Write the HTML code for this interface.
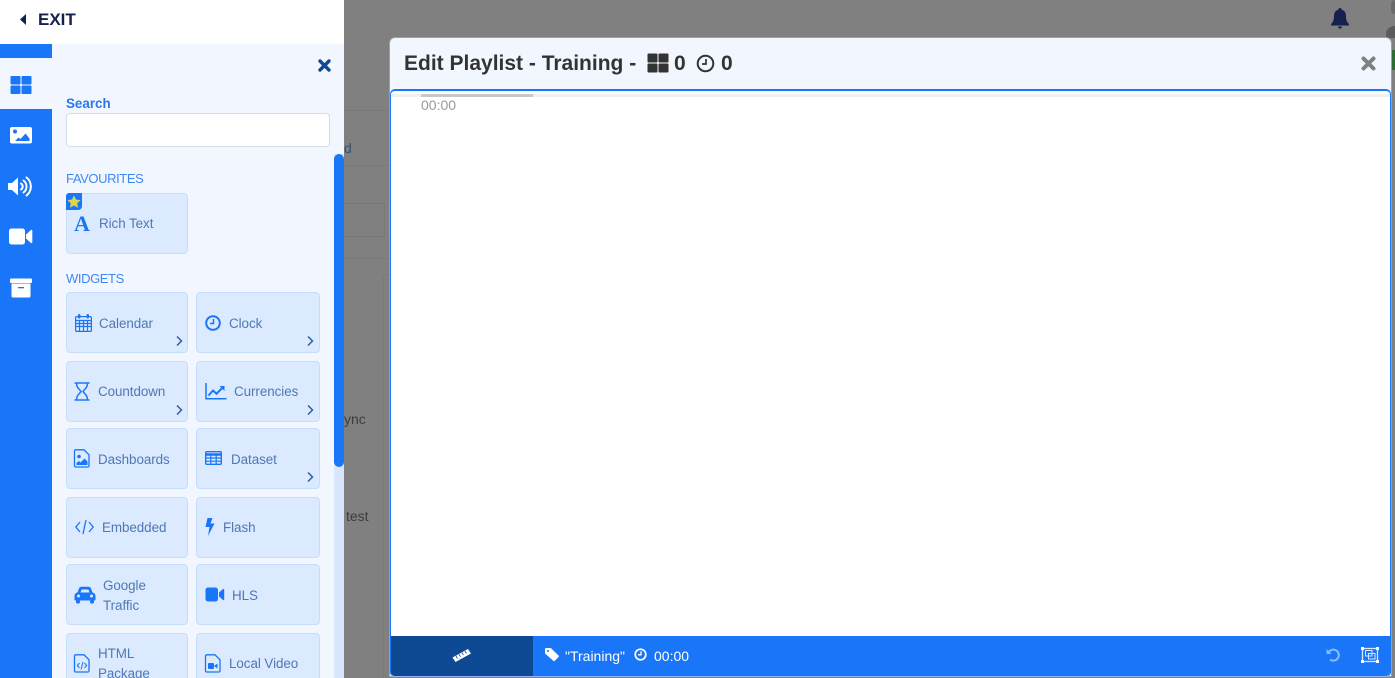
<!DOCTYPE html>
<html><head><meta charset="utf-8">
<style>
*{box-sizing:border-box}
html,body{margin:0;padding:0;width:1395px;height:678px;overflow:hidden;background:#808080;font-family:"Liberation Sans",sans-serif}
#w{position:relative;width:1395px;height:678px;overflow:hidden;background:#808080}
.a{position:absolute}
svg{position:absolute;display:block;overflow:visible}
.card{position:absolute;background:#dbeafe;border:1px solid #c6defb;border-radius:4px;width:122px;height:61px}
.card.r{width:124px}
.card .chev{right:3px}
.card.r .chev{right:4px}
.t{position:absolute;font-size:13.4px;line-height:20px;margin-top:1px;letter-spacing:-.05px;color:#4f78b4;white-space:nowrap}
.bg{position:absolute;color:#3d3d3d;font-size:14px}
.chev{position:absolute;bottom:5px;width:10px;height:12px}
</style></head>
<body><div id="w">
<!-- background -->
<div class="a" style="left:344px;top:110px;width:45px;height:1px;background:#797979"></div>
<div class="a" style="left:344px;top:165px;width:45px;height:1px;background:#797979"></div>
<div class="a" style="left:344px;top:203px;width:41px;height:34px;border:1px solid #797979;border-left:0"></div>
<div class="a" style="left:344px;top:258px;width:45px;height:1px;background:#797979"></div>
<div class="a" style="left:383px;top:274px;width:6px;height:404px;border-left:1px solid #797979;border-top:1px solid #797979;border-radius:4px 0 0 0"></div>
<div class="bg" style="left:344px;top:140px;color:#35506f">d</div>
<div class="bg" style="left:344px;top:411px">ync</div>
<div class="bg" style="left:346px;top:508px">test</div>
<svg style="left:1330px;top:8px" width="20" height="22" viewBox="0 0 20 22"><path d="M10 0c1 0 1.600.7 1.600 1.600C14.500 2.300 16 4.800 16 8c0 5 1.500 6.500 3 8v1.500H1V16c1.500-1.500 3-3 3-8 0-3.200 1.500-5.700 4.400-6.400C8.400.7 9 0 10 0zM8 18.500h4a2 2 0 0 1-4 0z" fill="#16204d"/></svg>
<div class="a" style="left:1386px;top:26px;width:12px;height:12px;background:#5c5c5c;border-radius:8px 0 0 0"></div>
<div class="a" style="left:1391px;top:0;width:6px;height:14px;background:#6a6a6a;border-radius:4px 0 0 4px"></div>
<div class="a" style="left:1391px;top:50px;width:4px;height:20px;background:#2d6a34"></div>

<!-- left panel -->
<div class="a" style="left:0;top:0;width:344px;height:44px;background:#fff"></div>
<svg style="left:20px;top:14px" width="6" height="11" viewBox="0 0 6 11"><path d="M6 0v11L0 5.500z" fill="#14204d"/></svg>
<div class="a" style="left:38px;top:9px;font-size:17px;line-height:22px;font-weight:bold;color:#14204d">EXIT</div>
<div class="a" style="left:52px;top:44px;width:292px;height:634px;background:#f2f7ff"></div>
<div class="a" style="left:0;top:44px;width:52px;height:634px;background:#1a76f8"></div>
<div class="a" style="left:0;top:58px;width:52px;height:51px;background:#f2f7ff"></div>
<div class="a" style="left:334px;top:154px;width:10px;height:524px;background:#d9e7fc"></div>
<div class="a" style="left:334px;top:154px;width:10px;height:313px;background:#1a76f8;border-radius:5px"></div>

<!-- tab icons -->
<svg style="left:10px;top:75px" width="22" height="20" viewBox="0 0 22 20"><g fill="#1a76f8"><rect x="0.500" y="1" width="10" height="8.500" rx="1"/><rect x="11.500" y="1" width="10" height="8.500" rx="1"/><rect x="0.500" y="10.500" width="10" height="8.500" rx="1"/><rect x="11.500" y="10.500" width="10" height="8.500" rx="1"/></g></svg>
<svg style="left:10px;top:127px" width="22" height="17" viewBox="0 0 22 17"><rect x="0" y="0" width="22" height="16.500" rx="2" fill="#fff"/><circle cx="5" cy="4.500" r="2" fill="#1a76f8"/><path d="M5 14l3.500-3.500 2 1.500 5-5.500 4 5V14z" fill="#1a76f8"/></svg>
<svg style="left:8px;top:176px" width="26" height="21" viewBox="0 0 26 21"><path d="M0 7h4l6-5.500v18L4 14H0z" fill="#fff"/><path d="M13 7.500a3.500 3.500 0 0 1 0 6M15.500 4.500a7.500 7.500 0 0 1 0 12M18.500 1.500a11.500 11.500 0 0 1 0 18" stroke="#fff" stroke-width="2" fill="none" stroke-linecap="round"/></svg>
<svg style="left:9px;top:228px" width="24" height="17" viewBox="0 0 24 17"><rect x="0" y="0.500" width="16" height="16" rx="2.500" fill="#fff"/><path d="M17 6.500l5-4.500c.7-.4 1.300 0 1.300.8v11.400c0 .8-.6 1.200-1.300.8l-5-4.500z" fill="#fff"/></svg>
<svg style="left:10px;top:278px" width="22" height="20" viewBox="0 0 22 20"><rect x="0" y="0.500" width="22" height="4.500" rx="1" fill="#fff"/><path d="M1.500 5.500h19v12.500a1.500 1.500 0 0 1-1.500 1.500H3A1.500 1.500 0 0 1 1.500 18z" fill="#fff"/><rect x="8" y="9" width="6" height="1.300" fill="#1a76f8"/></svg>

<!-- close -->
<svg style="left:318px;top:59px" width="13" height="13" viewBox="0 0 13 13"><path d="M2 2l9 9M11 2l-9 9" stroke="#0f4a94" stroke-width="3.400" stroke-linecap="round"/></svg>

<div class="a" style="left:66px;top:95px;font-size:13.4px;line-height:18px;font-weight:bold;color:#2d77ee">Search</div>
<div class="a" style="left:66px;top:113px;width:264px;height:34px;background:#fff;border:1px solid #d5dde8;border-radius:4px"></div>
<div class="a" style="left:66px;top:170px;font-size:13px;line-height:18px;color:#3f88f0;letter-spacing:-.4px">FAVOURITES</div>
<div class="a" style="left:66px;top:270px;font-size:13px;line-height:18px;color:#3f88f0;letter-spacing:-.4px">WIDGETS</div>

<!-- fav -->
<div class="card" style="left:66px;top:193px"></div>
<div class="a" style="left:66px;top:193px;width:16px;height:17px;background:#1a76f8;border-radius:3px 0 4px 0"></div>
<svg style="left:67px;top:195px" width="14" height="13" viewBox="0 0 14 13"><path d="M7 0.500l2 4 4.500.6-3.300 3.100.8 4.500L7 10.500 3 12.700l.8-4.500L.5 5.100 5 4.500z" fill="#d8d84a"/></svg>
<div class="a" style="left:74px;top:213px;font:bold 22px/22px 'Liberation Serif',serif;color:#1a76f8">A</div>
<div class="t" style="left:99px;top:213px">Rich Text</div>

<!-- row 1 -->
<div class="card" style="left:66px;top:292px"><svg class="chev" viewBox="0 0 10 12"><path d="M3 1.500l4.500 4.500L3 10.500" stroke="#30609f" stroke-width="1.500" fill="none"/></svg></div>
<svg style="left:75px;top:314px" width="17" height="18" viewBox="0 0 17 18"><g fill="none" stroke="#1a76f8" stroke-width="1.200"><rect x="0.600" y="2.600" width="15.800" height="14.800" rx="1.200"/><path d="M0.600 6.500h15.800M0.600 9.500h15.800M0.600 12.500h15.800M4.500 6.500v11M8.500 6.500v11M12.500 6.500v11"/></g><rect x="3" y="0" width="2.400" height="4.500" rx="1" fill="#1a76f8"/><rect x="11.600" y="0" width="2.400" height="4.500" rx="1" fill="#1a76f8"/></svg>
<div class="t" style="left:99px;top:313px">Calendar</div>
<div class="card r" style="left:196px;top:292px"><svg class="chev" viewBox="0 0 10 12"><path d="M3 1.500l4.500 4.500L3 10.500" stroke="#30609f" stroke-width="1.500" fill="none"/></svg></div>
<svg style="left:205px;top:315px" width="16" height="16" viewBox="0 0 16 16"><circle cx="8" cy="8" r="6.800" fill="none" stroke="#1a76f8" stroke-width="2"/><path d="M8.500 4v4.500H5" fill="none" stroke="#1a76f8" stroke-width="1.500"/></svg>
<div class="t" style="left:229px;top:313px">Clock</div>

<!-- row 2 -->
<div class="card" style="left:66px;top:361px"><svg class="chev" viewBox="0 0 10 12"><path d="M3 1.500l4.500 4.500L3 10.500" stroke="#30609f" stroke-width="1.500" fill="none"/></svg></div>
<svg style="left:74px;top:382px" width="16" height="19" viewBox="0 0 16 19"><path d="M0.500 1h15M0.500 18h15M2.500 1c0 5 3 6 4.500 8.500C5.500 12 2.500 13 2.500 18M13.500 1c0 5-3 6-4.500 8.500 1.500 2.500 4.500 3.500 4.500 8.500" fill="none" stroke="#1a76f8" stroke-width="1.500"/></svg>
<div class="t" style="left:98px;top:381px">Countdown</div>
<div class="card r" style="left:196px;top:361px"><svg class="chev" viewBox="0 0 10 12"><path d="M3 1.500l4.500 4.500L3 10.500" stroke="#30609f" stroke-width="1.500" fill="none"/></svg></div>
<svg style="left:205px;top:383px" width="22" height="17" viewBox="0 0 22 17"><path d="M1 0v15.800h20.500" fill="none" stroke="#1a76f8" stroke-width="1.500"/><path d="M3.500 12.500l4.500-5 3.500 3.200 6-6" fill="none" stroke="#1a76f8" stroke-width="2"/><path d="M14.500 3h5v5z" fill="#1a76f8"/></svg>
<div class="t" style="left:234px;top:381px">Currencies</div>

<!-- row 3 -->
<div class="card" style="left:66px;top:428px"></div>
<svg style="left:74px;top:449px" width="16" height="19" viewBox="0 0 16 19"><path d="M1.500 0.800h8.500l5 5v11a1.200 1.200 0 0 1-1.200 1.200H1.700a1.200 1.200 0 0 1-1.200-1.200V2a1.200 1.200 0 0 1 1-1.200z" fill="none" stroke="#1a76f8" stroke-width="1.300"/><circle cx="5" cy="7.500" r="1.800" fill="#1a76f8"/><path d="M2.500 16v-2l2.500-2 1.500 1.500 4-4 3 3V16z" fill="#1a76f8"/></svg>
<div class="t" style="left:98px;top:449px">Dashboards</div>
<div class="card r" style="left:196px;top:428px"><svg class="chev" viewBox="0 0 10 12"><path d="M3 1.500l4.500 4.500L3 10.500" stroke="#30609f" stroke-width="1.500" fill="none"/></svg></div>
<svg style="left:205px;top:451px" width="17" height="14" viewBox="0 0 17 14"><rect x="0.700" y="0.700" width="15.600" height="12.600" rx="1" fill="none" stroke="#1a76f8" stroke-width="1.400"/><path d="M0.700 3.500h15.600" stroke="#1a76f8" stroke-width="2.500"/><path d="M0.700 7h15.600M0.700 10.200h15.600M5.800 3v10M11.200 3v10" stroke="#1a76f8" stroke-width="1.200"/></svg>
<div class="t" style="left:231px;top:449px">Dataset</div>

<!-- row 4 -->
<div class="card" style="left:66px;top:497px"></div>
<svg style="left:75px;top:519px" width="19" height="16" viewBox="0 0 19 16"><path d="M5 3L0.800 8 5 13M14 3l4.200 5L14 13M11 1L8 15" fill="none" stroke="#1a76f8" stroke-width="1.300"/></svg>
<div class="t" style="left:102px;top:517px">Embedded</div>
<div class="card r" style="left:196px;top:497px"></div>
<svg style="left:205px;top:518px" width="10" height="18" viewBox="0 0 10 18"><path d="M2.500 0h5L5.500 5.500H9.500L3 18l1.500-9H0.500z" fill="#1a76f8"/></svg>
<div class="t" style="left:223px;top:517px">Flash</div>

<!-- row 5 -->
<div class="card" style="left:66px;top:564px"></div>
<svg style="left:74px;top:586px" width="22" height="18" viewBox="0 0 22 18"><path d="M3.500 6.500L5 2.500C5.500 1.200 6.500.8 7.500.8h7c1 0 2 .4 2.500 1.700l1.500 4c1.500.4 3 1.500 3 3.500v3.500c0 .6-.4 1-1 1H1.500c-.6 0-1-.4-1-1V10c0-2 1.500-3.100 3-3.500z" fill="#1a76f8"/><path d="M6.500 6.500l1-3h7l1 3z" fill="#dbeafe"/><circle cx="4.500" cy="10" r="1.500" fill="#dbeafe"/><circle cx="17.500" cy="10" r="1.500" fill="#dbeafe"/><rect x="2" y="14" width="4" height="3.500" rx="1.200" fill="#1a76f8"/><rect x="16" y="14" width="4" height="3.500" rx="1.200" fill="#1a76f8"/></svg>
<div class="t" style="left:103px;top:575px">Google</div>
<div class="t" style="left:103px;top:595px">Traffic</div>
<div class="card r" style="left:196px;top:564px"></div>
<svg style="left:205px;top:587px" width="20" height="15" viewBox="0 0 20 15"><rect x="0.500" y="0.500" width="12.500" height="14" rx="2.500" fill="#1a76f8"/><path d="M14 5.500l4-3.500c.6-.4 1.200 0 1.200.7v9.600c0 .7-.6 1.100-1.200.7l-4-3.500z" fill="#1a76f8"/></svg>
<div class="t" style="left:232px;top:585px">HLS</div>

<!-- row 6 -->
<div class="card" style="left:66px;top:633px"></div>
<svg style="left:74px;top:654px" width="16" height="19" viewBox="0 0 16 19"><path d="M1.500 0.800h8.500l5 5v11a1.200 1.200 0 0 1-1.200 1.200H1.700a1.200 1.200 0 0 1-1.200-1.200V2a1.200 1.200 0 0 1 1-1.200z" fill="none" stroke="#1a76f8" stroke-width="1.300"/><path d="M5.500 9L3.300 11.500 5.500 14M10.500 9l2.200 2.500-2.200 2.500M9 8l-2 7.500" fill="none" stroke="#1a76f8" stroke-width="1"/></svg>
<div class="t" style="left:98px;top:643px">HTML</div>
<div class="t" style="left:98px;top:663px">Package</div>
<div class="card r" style="left:196px;top:633px"></div>
<svg style="left:205px;top:654px" width="16" height="19" viewBox="0 0 16 19"><path d="M1.500 0.800h8.500l5 5v11a1.200 1.200 0 0 1-1.200 1.200H1.700a1.200 1.200 0 0 1-1.200-1.200V2a1.200 1.200 0 0 1 1-1.200z" fill="none" stroke="#1a76f8" stroke-width="1.300"/><rect x="3" y="9" width="6" height="6" rx="1" fill="#1a76f8"/><path d="M9.500 11.500l3-2v5l-3-2z" fill="#1a76f8"/></svg>
<div class="t" style="left:229px;top:653px">Local Video</div>

<!-- modal -->
<div class="a" style="left:389px;top:37px;width:1003px;height:640px;background:#f2f7ff;border-radius:6px 6px 0 0;border:1px solid #9aa0a8"></div>
<div class="a" style="left:404px;top:51px;font-size:21px;line-height:26px;font-weight:bold;color:#333;white-space:nowrap">Edit Playlist - Training -</div>
<svg style="left:647px;top:53px" width="22" height="20" viewBox="0 0 22 20"><g fill="#333"><rect x="0.500" y="0.500" width="10" height="9" rx="1"/><rect x="11.500" y="0.500" width="10" height="9" rx="1"/><rect x="0.500" y="10.500" width="10" height="9" rx="1"/><rect x="11.500" y="10.500" width="10" height="9" rx="1"/></g></svg>
<div class="a" style="left:674px;top:51px;font-size:21px;line-height:26px;font-weight:bold;color:#333">0</div>
<svg style="left:696px;top:54px" width="19" height="19" viewBox="0 0 19 19"><circle cx="9.500" cy="9.500" r="7.800" fill="none" stroke="#333" stroke-width="2"/><path d="M10 5v5H6" fill="none" stroke="#333" stroke-width="1.700"/></svg>
<div class="a" style="left:721px;top:51px;font-size:21px;line-height:26px;font-weight:bold;color:#333">0</div>
<svg style="left:1361px;top:56px" width="15" height="15" viewBox="0 0 15 15"><path d="M2.500 2.500l10 10M12.500 2.500l-10 10" stroke="#808080" stroke-width="4" stroke-linecap="round"/></svg>

<div class="a" style="left:390px;top:89px;width:1001px;height:588px;background:#fff;border:1px solid #1a76f8;border-top-width:2px;border-bottom-color:#8cb8f5;border-radius:5px;overflow:hidden">
  <div class="a" style="left:0;top:3px;width:999px;height:3px;background:#f0f0f0"></div>
  <div class="a" style="left:30px;top:3px;width:112px;height:3px;background:#c8c8c8"></div>
  <div class="a" style="left:30px;top:6px;font-size:14px;line-height:17px;color:#999">00:00</div>
  <div class="a" style="left:0;top:545px;width:999px;height:40px;background:#1a76f8"></div>
  <div class="a" style="left:0;top:545px;width:142px;height:40px;background:#0e4a94"></div>
</div>
<svg style="left:452px;top:648px" width="20" height="14" viewBox="0 0 20 14"><path d="M0.500 9.500L16 1l3 4.500L3.500 14z" fill="#fff"/><path d="M4 8l1.500 2.500M7 6.300l1.500 2.500M10 4.600l1.500 2.500M13 3l1.500 2.500" stroke="#0e4a94" stroke-width="0.800"/></svg>
<svg style="left:545px;top:648px" width="14" height="13" viewBox="0 0 14 13"><path d="M0 1.200C0 .5.500 0 1.200 0h4.600l7.700 7.500a1 1 0 0 1 0 1.500l-3.700 3.700a1 1 0 0 1-1.500 0L0 5.500z" fill="#fff"/><circle cx="3" cy="3" r="1" fill="#1a76f8"/></svg>
<div class="a" style="left:565px;top:647px;font-size:14px;line-height:18px;color:#fff;white-space:nowrap">"Training"</div>
<svg style="left:634px;top:648px" width="13" height="13" viewBox="0 0 13 13"><circle cx="6.500" cy="6.500" r="5.300" fill="none" stroke="#fff" stroke-width="1.700"/><path d="M7 3.200v3.600H4" fill="none" stroke="#fff" stroke-width="1.300"/></svg>
<div class="a" style="left:654px;top:647px;font-size:14px;line-height:18px;color:#fff">00:00</div>
<svg style="left:1326px;top:648px" width="14" height="14" viewBox="0 0 14 14"><path d="M2.500 4.500A5.500 5.500 0 1 1 4 11.500" fill="none" stroke="#8cbbfb" stroke-width="2"/><path d="M0.500 1v5h5z" fill="#8cbbfb"/></svg>
<svg style="left:1361px;top:647px" width="18" height="16" viewBox="0 0 18 16"><rect x="1.500" y="1.500" width="15" height="13" fill="none" stroke="#d5e6fd" stroke-width="1.300"/><rect x="0" y="0" width="3" height="3" fill="#fff"/><rect x="15" y="0" width="3" height="3" fill="#fff"/><rect x="0" y="13" width="3" height="3" fill="#fff"/><rect x="15" y="13" width="3" height="3" fill="#fff"/><rect x="4.500" y="3.500" width="6.500" height="5.500" fill="none" stroke="#d5e6fd"/><rect x="7.500" y="6.500" width="6.500" height="5.500" fill="none" stroke="#d5e6fd"/></svg>
</div></body></html>
